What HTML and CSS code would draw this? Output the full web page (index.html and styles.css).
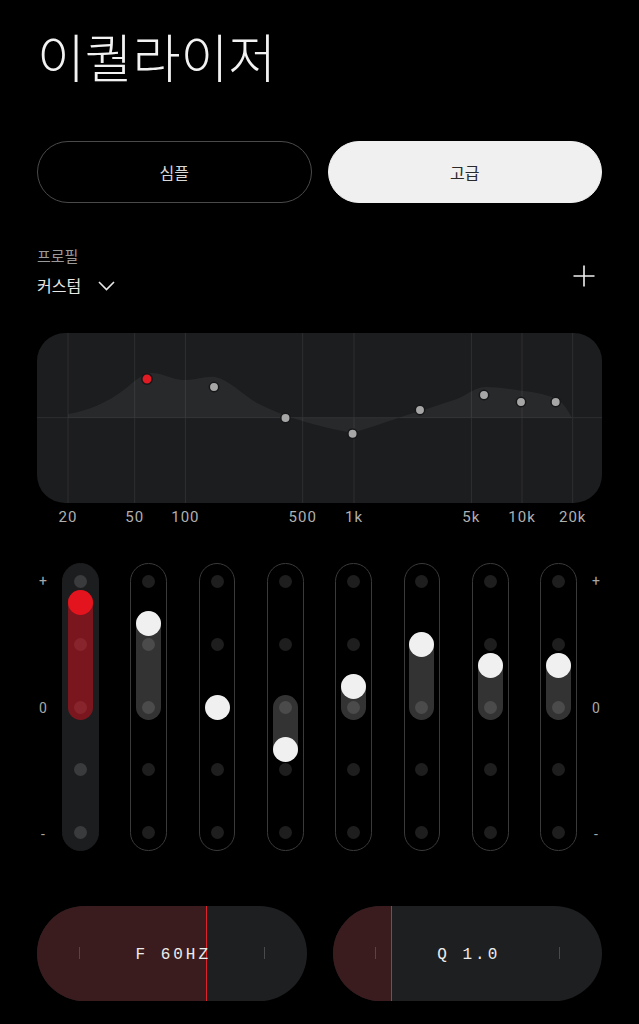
FILE: index.html
```html
<!DOCTYPE html>
<html lang="ko">
<head>
<meta charset="utf-8">
<title>이퀄라이저</title>
<link rel="stylesheet" href="styles.css">
</head>
<body>
<main class="page">
  <h1 class="title">이퀄라이저</h1>

  <div class="mode-toggle">
    <button class="mode-btn">심플</button>
    <button class="mode-btn is-active">고급</button>
  </div>

  <div class="profile-row">
    <div class="profile">
      <div class="profile-label">프로필</div>
      <div class="profile-select">
        <span>커스텀</span>
        <svg class="chevron" width="17" height="10" viewBox="0 0 17 10"><path d="M1 1 L8.5 8.5 L16 1" fill="none" stroke="#e8e8e8" stroke-width="1.6"/></svg>
      </div>
    </div>
    <svg class="plus" width="22" height="22" viewBox="0 0 22 22"><path d="M11 0.5 V21.5 M0.5 11 H21.5" stroke="#f0f0f0" stroke-width="1.6"/></svg>
  </div>

  <div class="graph">
    <svg width="565" height="170" viewBox="0 0 565 170">
      <g stroke="#2e2f32" stroke-width="1">
        <line x1="31" y1="0" x2="31" y2="170"/>
        <line x1="97.7" y1="0" x2="97.7" y2="170"/>
        <line x1="148.4" y1="0" x2="148.4" y2="170"/>
        <line x1="265.7" y1="0" x2="265.7" y2="170"/>
        <line x1="317" y1="0" x2="317" y2="170"/>
        <line x1="434.4" y1="0" x2="434.4" y2="170"/>
        <line x1="485" y1="0" x2="485" y2="170"/>
        <line x1="535.7" y1="0" x2="535.7" y2="170"/>
        <line x1="0" y1="84.7" x2="565" y2="84.7"/>
      </g>
      <path fill="rgba(255,255,255,0.055)" d="M31,84.7 L31,81 C50,78 70,70 88,56 C100,46 107,40 115,40 C126,40 135,47 148,47 C160,47 168,43 178,44 C193,47 208,64 222,71 C238,79 250,83 262,87 C282,93 300,97 315,100 C332,95 352,88 370,82 C386,77 402,72 420,66 C430,62 438,54 449,54 C462,54 480,57 495,59 C505,61 514,63 520,66 C527,70 531,78 535,84.7 Z"/>
      <g stroke="#161719" stroke-width="1.5">
        <circle cx="110" cy="46" r="5.2" fill="#e01b24"/>
        <circle cx="177" cy="54" r="4.7" fill="#a6a6a6"/>
        <circle cx="248.5" cy="85" r="4.7" fill="#a6a6a6"/>
        <circle cx="315.6" cy="100.7" r="4.7" fill="#a6a6a6"/>
        <circle cx="383" cy="77" r="4.7" fill="#a6a6a6"/>
        <circle cx="447" cy="62" r="4.7" fill="#a6a6a6"/>
        <circle cx="484" cy="69" r="4.7" fill="#a6a6a6"/>
        <circle cx="518.7" cy="69" r="4.7" fill="#a6a6a6"/>
      </g>
    </svg>
  </div>

  <div class="axis">
    <span class="axis-label" style="left:31px">20</span>
    <span class="axis-label" style="left:97.7px">50</span>
    <span class="axis-label" style="left:148.4px">100</span>
    <span class="axis-label" style="left:265.7px">500</span>
    <span class="axis-label" style="left:317px">1k</span>
    <span class="axis-label" style="left:434.4px">5k</span>
    <span class="axis-label" style="left:485px">10k</span>
    <span class="axis-label" style="left:535.7px">20k</span>
  </div>

  <div class="eq">
    <div class="scale"><span>+</span><span>0</span><span>-</span></div>
    <div class="bands">
      <div class="band is-active">
        <div class="dots"><i></i><i></i><i></i><i></i><i></i></div>
        <div class="fill" style="top:27.2px;height:130px"></div>
        <div class="knob" style="top:27.2px"></div>
      </div>
      <div class="band">
        <div class="dots"><i></i><i></i><i></i><i></i><i></i></div>
        <div class="fill" style="top:47.8px;height:109.4px"></div>
        <div class="knob" style="top:47.8px"></div>
      </div>
      <div class="band">
        <div class="dots"><i></i><i></i><i></i><i></i><i></i></div>
        <div class="knob" style="top:132.2px"></div>
      </div>
      <div class="band">
        <div class="dots"><i></i><i></i><i></i><i></i><i></i></div>
        <div class="fill" style="top:132.2px;height:66.3px"></div>
        <div class="knob" style="top:173.5px"></div>
      </div>
      <div class="band">
        <div class="dots"><i></i><i></i><i></i><i></i><i></i></div>
        <div class="fill" style="top:110.5px;height:46.7px"></div>
        <div class="knob" style="top:110.5px"></div>
      </div>
      <div class="band">
        <div class="dots"><i></i><i></i><i></i><i></i><i></i></div>
        <div class="fill" style="top:68.8px;height:88.4px"></div>
        <div class="knob" style="top:68.8px"></div>
      </div>
      <div class="band">
        <div class="dots"><i></i><i></i><i></i><i></i><i></i></div>
        <div class="fill" style="top:89.5px;height:67.7px"></div>
        <div class="knob" style="top:89.5px"></div>
      </div>
      <div class="band">
        <div class="dots"><i></i><i></i><i></i><i></i><i></i></div>
        <div class="fill" style="top:89.5px;height:67.7px"></div>
        <div class="knob" style="top:89.5px"></div>
      </div>
    </div>
    <div class="scale"><span>+</span><span>0</span><span>-</span></div>
  </div>

  <div class="params">
    <div class="param">
      <div class="param-fill" style="width:63%"></div>
      <i class="tick tick-left"></i>
      <span class="param-text">F 60HZ</span>
      <i class="tick tick-right"></i>
    </div>
    <div class="param">
      <div class="param-fill" style="width:22%"></div>
      <i class="tick tick-left"></i>
      <span class="param-text">Q 1.0</span>
      <i class="tick tick-right"></i>
    </div>
  </div>
</main>
</body>
</html>
```

FILE: styles.css
```css
* { box-sizing: border-box; }

html, body {
  margin: 0;
  background: #000;
}

body {
  font-family: "Noto Sans CJK KR", "Noto Sans", sans-serif;
  color: #f0f0f0;
}

.page {
  width: 639px;
  padding: 30px 37px 0 37px;
}

.title {
  margin: 0;
  font-size: 52px;
  line-height: 52px;
  font-weight: 300;
  letter-spacing: 0;
  color: #f2f2f2;
}

.mode-toggle {
  margin-top: 59px;
  display: grid;
  grid-template-columns: 1fr 1fr;
  column-gap: 16px;
}

.mode-btn {
  height: 62px;
  border-radius: 31px;
  border: 1.2px solid #4a4a4a;
  background: transparent;
  color: #d8d8d8;
  font-family: "Noto Sans CJK KR", sans-serif;
  font-size: 16px;
  padding: 0;
}

.mode-btn.is-active {
  background: #eff0ef;
  border-color: #eff0ef;
  color: #2a2a2a;
}

.profile-row {
  margin-top: 43px;
  display: flex;
  justify-content: space-between;
  align-items: flex-end;
}

.profile-label {
  font-size: 15px;
  line-height: 20px;
  color: #9a9a9a;
}

.profile-select {
  margin-top: 8px;
  display: flex;
  align-items: center;
  font-size: 16px;
  line-height: 22px;
  color: #e8e8e8;
}

.chevron {
  margin-left: 17px;
  margin-top: 2px;
}

.plus {
  margin-bottom: 9px;
  margin-right: 7px;
}

.graph {
  margin-top: 37px;
  height: 170px;
  border-radius: 28px;
  background: #1c1d1f;
  overflow: hidden;
}

.graph svg { display: block; }

.axis {
  position: relative;
  margin-top: 5px;
  height: 18px;
}

.axis-label {
  position: absolute;
  top: 0;
  transform: translateX(-50%);
  font-family: "Roboto", "Liberation Sans", sans-serif;
  font-size: 15px;
  line-height: 18px;
  letter-spacing: 1px;
  color: #b0b0b0;
}

.eq {
  margin-top: 37px;
  display: grid;
  grid-template-columns: 12px 1fr 12px;
  height: 288px;
}

.scale {
  display: flex;
  flex-direction: column;
  justify-content: space-between;
  align-items: center;
  padding: 12px 0 10px;
  font-family: "Roboto", "Liberation Sans", sans-serif;
  font-size: 14px;
  line-height: 13px;
  color: #a8a8a8;
}

.bands {
  display: flex;
  justify-content: space-between;
  padding: 0 13px;
}

.band {
  position: relative;
  width: 36.7px;
  height: 288px;
  border-radius: 18.35px;
  border: 1px solid #3a3a3a;
}

.band.is-active {
  background: #1c1d1f;
  border-color: #1c1d1f;
}

.dots {
  height: 100%;
  display: flex;
  flex-direction: column;
  justify-content: space-between;
  align-items: center;
  padding: 11.2px 0;
}

.dots i {
  display: block;
  width: 13px;
  height: 13px;
  border-radius: 50%;
  background: #1e1e1e;
}

.band.is-active .dots i { background: #3a3b3d; }

.fill {
  position: absolute;
  left: 50%;
  width: 25px;
  margin-left: -12.5px;
  margin-top: -1px;
  border-radius: 12.5px;
  background: rgba(255, 255, 255, 0.2);
}

.band.is-active .fill { background: rgba(200, 18, 30, 0.55); }

.knob {
  position: absolute;
  left: 50%;
  width: 25px;
  height: 25px;
  margin-left: -12.5px;
  margin-top: -1px;
  border-radius: 50%;
  background: #f0f0f0;
}

.band.is-active .knob { background: #e3141d; }

.params {
  margin-top: 55px;
  display: grid;
  grid-template-columns: 1fr 1fr;
  column-gap: 26px;
}

.param {
  position: relative;
  height: 95px;
  border-radius: 47.5px;
  background: #1e1f21;
  overflow: hidden;
  display: flex;
  align-items: center;
  justify-content: center;
}

.param-fill {
  position: absolute;
  left: 0;
  top: 0;
  bottom: 0;
  background: #3a1c1f;
  border-right: 1.5px solid #e0202a;
}

.param-text {
  position: relative;
  top: 1px;
  font-family: "Liberation Mono", "DejaVu Sans Mono", monospace;
  font-size: 16px;
  letter-spacing: 3px;
  margin-right: -3px;
  color: #ececec;
}

.tick {
  position: absolute;
  top: 47px;
  width: 1px;
  height: 12px;
  margin-top: -6px;
  background: #4a4a4a;
}

.tick-left { left: 42px; }
.tick-right { right: 42px; }
```
